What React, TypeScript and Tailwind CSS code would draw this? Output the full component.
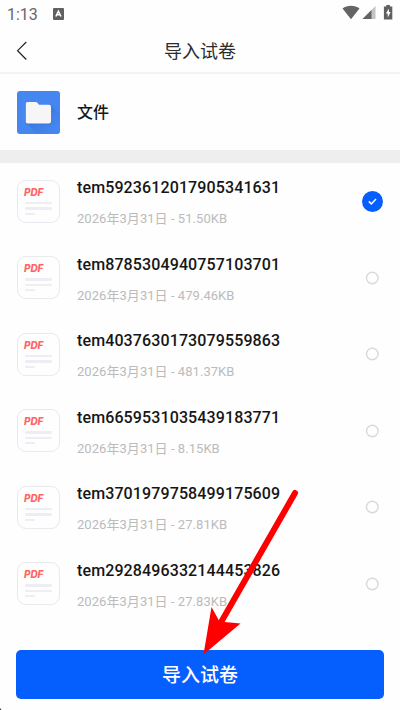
import React from "react";

const files = [
  { name: "tem5923612017905341631", size: "51.50KB", checked: true },
  { name: "tem8785304940757103701", size: "479.46KB", checked: false },
  { name: "tem4037630173079559863", size: "481.37KB", checked: false },
  { name: "tem6659531035439183771", size: "8.15KB", checked: false },
  { name: "tem3701979758499175609", size: "27.81KB", checked: false },
  { name: "tem2928496332144453826", size: "27.83KB", checked: false },
];

const StatusBar = () => {
  return (
    <div className="flex h-7 items-center justify-between pl-[7px] pr-[7px] text-[#686868]">
      <div className="flex items-center gap-[15px]">
        <span className="pt-px text-[16px] leading-7 tracking-[0px]">1:13</span>
        <svg width="11" height="12" viewBox="0 0 11 12" className="-mt-px">
          <rect width="11" height="12" rx="1" fill="#606060" />
          <path d="M2.8 8.5 5.4 3.2 8 8.5M4 6.8h2.8" fill="none" stroke="#fff" strokeWidth="1.5" />
        </svg>
      </div>
      <svg width="51" height="16" viewBox="0 0 51 16" className="-mt-[2px]">
        <path d="M0.5 3.6C5.2 -0.2 12.8 -0.2 17.5 3.6L9 14.2Z" fill="#646464" />
        <path d="M33.5 1v13H20.5Z" fill="#c4c4c4" />
        <path d="M29.5 5v9h-9Z" fill="#646464" />
        <path d="M44.3 0h3.6v1.6h2.4v12.8h-8.4V1.6h2.4Z" fill="#606060" />
        <path d="M46.9 3.5 43.9 8.6h1.8v3.8l3-5.3h-1.8Z" fill="#fff" />
      </svg>
    </div>
  );
};

const Header = () => {
  return (
    <header className="grid h-[46px] grid-cols-3 items-center border-b-2 border-[#f3f3f3]">
      <button className="pl-4 pt-px">
        <svg width="12" height="20" viewBox="0 0 12 20" fill="none" stroke="#222" strokeWidth="1.2">
          <path d="M10.3 1 1.6 9.7l8.7 8.8" />
        </svg>
      </button>
      <h1 className="pt-[3px] text-center text-[18px] leading-6 text-[#2c2c2c]">导入试卷</h1>
    </header>
  );
};

const FolderIcon = () => {
  return (
    <svg width="43" height="43" viewBox="0 0 43 43">
      <defs>
        <linearGradient id="folderShade" x1="0" y1="0" x2="1" y2="1">
          <stop offset="0.3" stopColor="#3269c8" />
          <stop offset="0.85" stopColor="#4586f1" />
        </linearGradient>
      </defs>
      <rect width="43" height="43" rx="3" fill="#4586f1" />
      <path d="M34 14 43 23v17q0 3-3 3H20L9.5 32Z" fill="url(#folderShade)" opacity=".45" />
      <path d="M9 14v17q0 2 2 2h21q2 0 2-2" fill="none" stroke="#2f68c5" opacity=".6" />
      <path d="M10.5 11h8.500q1 0 1.500 1l1.500 1.700h10q2 0 2 1.800V30.500q0 2-2 2H10.500q-1.700 0-1.700-2V12.700Q8.800 11 10.500 11Z" fill="#f6f6f6" />
    </svg>
  );
};

const PdfIcon = () => {
  return (
    <div className="flex h-[43px] w-[43px] flex-col rounded-[9px] border border-[#e9e9ee] pl-[6px] pt-[5px]">
      <span className="font-[Inter,sans-serif] text-[9.9px] font-extrabold italic leading-[13px] text-[#ff6464]">PDF</span>
      <div className="ml-px mt-[3px] flex flex-col gap-[3px]">
        <div className="h-[2.4px] w-[27px] rounded-full bg-[#ededf3]" />
        <div className="h-[2.4px] w-[27px] rounded-full bg-[#ededf3]" />
        <div className="h-[2.4px] w-[10px] rounded-full bg-[#ededf3]" />
      </div>
    </div>
  );
};

const FileRow = ({ name, size, checked }: { name: string; size: string; checked: boolean }) => {
  return (
    <li className="flex h-[76.5px] items-center pl-[17px] pr-[17px]">
      <PdfIcon />
      <div className="ml-[17px] flex-1 pt-[5px]">
        <p className="text-[16px] font-medium leading-5 tracking-[0.12px] text-[#161616]">{name}</p>
        <p className="mt-[11px] text-[13px] leading-5 tracking-[0.05px] text-[#bbb]">2026年3月31日 - {size}</p>
      </div>
      <div className="flex w-[22px] justify-center">
        {checked ? (
          <span className="flex h-[21px] w-[21px] items-center justify-center rounded-full bg-[#055fff]">
            <svg width="9" height="7" viewBox="0 0 9 7" fill="none" stroke="#fff" strokeWidth="1.5">
              <path d="m.8 3.4 2.5 2.5L8 1" />
            </svg>
          </span>
        ) : (
          <svg width="14" height="14" viewBox="0 0 14 14" fill="none">
            <circle cx="7.3" cy="7" r="5.8" stroke="#d9d9d9" strokeWidth="1.4" />
          </svg>
        )}
      </div>
    </li>
  );
};

const App = () => {
  return (
    <div className="relative flex h-[710px] w-[400px] flex-col overflow-hidden bg-[#fefefe] font-[Roboto,'Noto_Sans_CJK_SC',sans-serif]">
      <StatusBar />
      <Header />
      <div className="flex h-[76px] items-center gap-[17px] pl-[17px]">
        <FolderIcon />
        <span className="pt-[2px] text-[16px] font-medium text-[#161616]">文件</span>
      </div>
      <div className="h-[13px] shrink-0 bg-[#eee]" />
      <ul className="h-[487px] shrink-0">
        {files.map((file) => (
          <FileRow key={file.name} {...file} />
        ))}
      </ul>
      <button className="mx-4 h-[49px] shrink-0 rounded-[5px] bg-[#055fff] pt-[3px] text-[19px] font-medium text-white">
        导入试卷
      </button>

      {/* pointer to the import button */}
      <svg className="pointer-events-none absolute left-0 top-0" width="400" height="710" viewBox="0 0 400 710">
        <path d="M295 493 220 624" stroke="#f00" strokeWidth="6" strokeLinecap="round" />
        <path d="M203.5 654.5 211.5 607 219.5 621.5 240.5 623.5Z" fill="#f00" />
        <path d="M0 708v2h1.5Z" fill="#333" />
      </svg>
    </div>
  );
};

export default App;
